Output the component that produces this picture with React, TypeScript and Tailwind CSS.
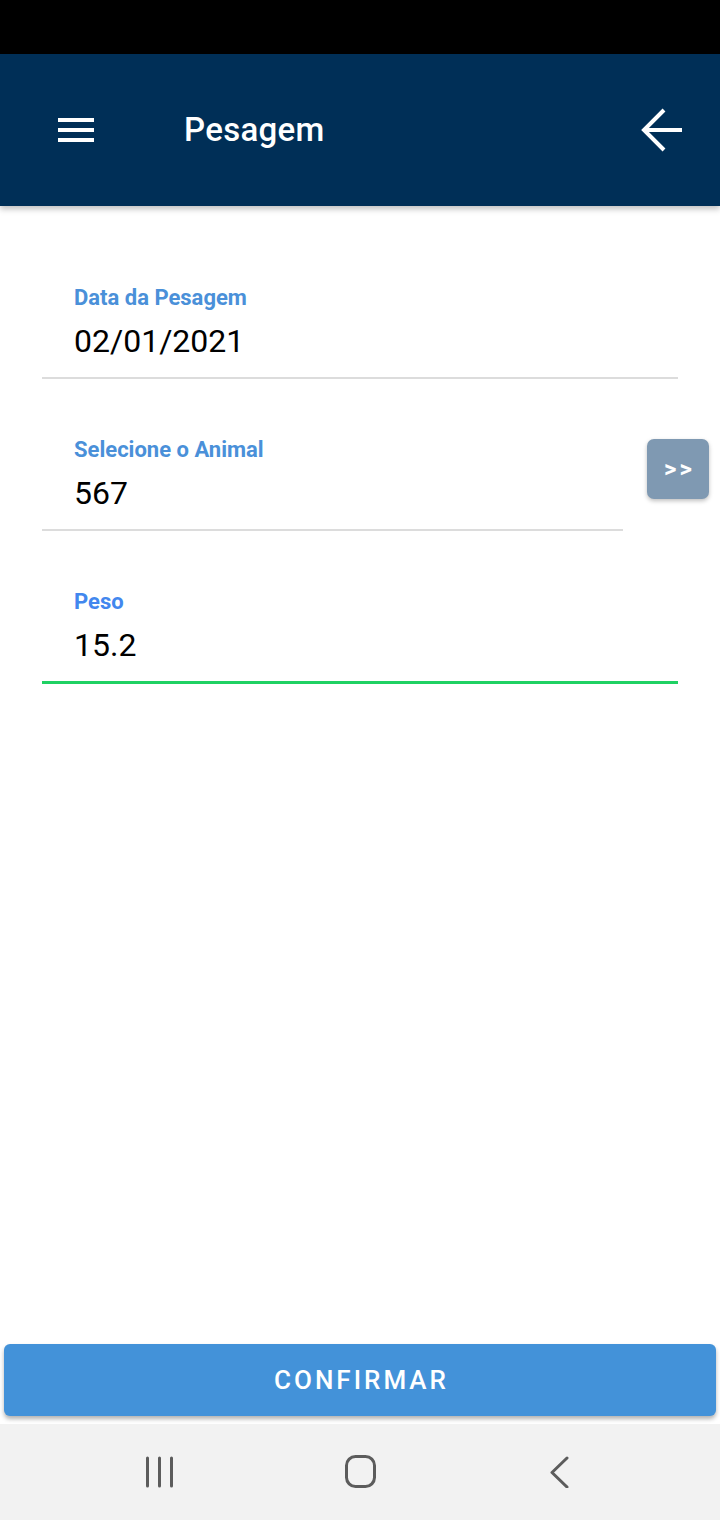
import React from 'react';

const Field = ({
  label,
  value,
  labelColor,
  lineClass,
}: {
  label: string;
  value: string;
  labelColor: string;
  lineClass: string;
}) => (
  <div className={`flex-1 pl-[32px] pb-[18px] ${lineClass}`}>
    <div className={`text-[22px] leading-[26px] font-bold ${labelColor}`}>{label}</div>
    <div className="mt-[12px] text-[32px] leading-[36px] text-black">{value}</div>
  </div>
);

const App = () => {
  return (
    <div className="h-[1520px] w-[720px] flex flex-col bg-white font-['Roboto',sans-serif] overflow-hidden">
      {/* Status bar */}
      <div className="h-[54px] bg-black" />

      {/* Header */}
      <div className="relative z-10 h-[152px] bg-[#002f57] flex items-center shadow-[0_3px_6px_rgba(0,0,0,0.25)]">
        <div className="ml-[58px] w-[36px] flex flex-col gap-[6px]">
          <div className="h-[4px] bg-white" />
          <div className="h-[4px] bg-white" />
          <div className="h-[4px] bg-white" />
        </div>
        <h1 className="ml-[90px] text-[33px] font-medium tracking-[0.3px] text-white">Pesagem</h1>
        <svg className="ml-auto mr-[37px]" width="42" height="44" viewBox="0 0 42 44" fill="none">
          <path d="M3 22 H41" stroke="white" strokeWidth="4" />
          <path d="M23 2 L3 22 L23 42" stroke="white" strokeWidth="4" />
        </svg>
      </div>

      {/* Form */}
      <div className="flex-1 flex flex-col pt-[79px]">
        <div className="px-[42px]">
          <Field label="Data da Pesagem" value="02/01/2021" labelColor="text-[#4a90d9]" lineClass="border-b-2 border-[#dcdcdc]" />
        </div>

        <div className="mt-[58px] flex items-start pl-[42px] pr-[11px] gap-[24px]">
          <Field label="Selecione o Animal" value="567" labelColor="text-[#4a90d9]" lineClass="border-b-2 border-[#dcdcdc]" />
          <button className="mt-[2px] w-[62px] h-[60px] rounded-[7px] bg-[#7f99b2] text-white text-[24px] font-bold tracking-[3px] pl-[3px] shadow-[0_2px_4px_rgba(0,0,0,0.25)]">
            &gt;&gt;
          </button>
        </div>

        <div className="mt-[58px] px-[42px]">
          <Field label="Peso" value="15.2" labelColor="text-[#4287ee]" lineClass="border-b-[3px] border-[#1fd163]" />
        </div>
      </div>

      {/* Confirm */}
      <div className="px-[4px] pb-[8px]">
        <button className="w-full h-[72px] rounded-[6px] bg-[#4392d9] text-white text-[26px] font-medium tracking-[3px] pl-[3px] shadow-[0_3px_4px_rgba(0,0,0,0.3)]">
          CONFIRMAR
        </button>
      </div>

      {/* Navigation bar */}
      <div className="h-[96px] bg-[#f2f2f2] flex items-center pl-[140px] gap-[160px]">
        <svg width="40" height="32" viewBox="0 0 40 32" fill="none">
          <path d="M7.5 2 V30 M19.5 2 V30 M31.5 2 V30" stroke="#5c5c5c" strokeWidth="3" strokeLinecap="round" />
        </svg>
        <svg width="40" height="34" viewBox="0 0 40 34" fill="none">
          <rect x="6.5" y="1.5" width="28" height="30" rx="9" stroke="#5c5c5c" strokeWidth="3" />
        </svg>
        <svg width="40" height="32" viewBox="0 0 40 32" fill="none">
          <path d="M27 2 L12 16.5 L27 31" stroke="#5c5c5c" strokeWidth="3" strokeLinecap="round" strokeLinejoin="round" />
        </svg>
      </div>
    </div>
  );
};

export default App;
